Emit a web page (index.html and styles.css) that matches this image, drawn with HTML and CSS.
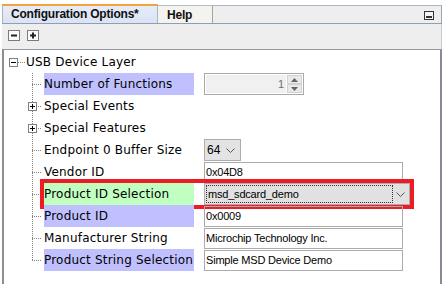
FILE: index.html
```html
<!DOCTYPE html>
<html>
<head>
    <meta charset="UTF-8">
    <meta name="viewport" content="width=device-width, initial-scale=1.0">
    <title>Configuration Options</title>
    <link rel="stylesheet" href="styles.css">
</head>
<body>
<div class="panel">
    <div class="tabs">
        <div class="tab active">Configuration Options*</div>
        <div class="tab">Help</div>
        <div class="tab-fill">
            <svg class="min-btn" width="10" height="9" viewBox="0 0 10 9">
                <rect x="0.5" y="0.5" width="9" height="8" fill="#f4f4f4" stroke="#333"/>
                <rect x="2" y="5" width="6" height="2" fill="#333"/>
            </svg>
        </div>
    </div>

    <div class="toolbar">
        <svg class="tb-btn" width="12" height="11" viewBox="0 0 12 11">
            <rect x="0.5" y="0.5" width="11" height="10" fill="#fbfbfb" stroke="#7a7a7a"/>
            <rect x="3" y="4.5" width="6" height="2" fill="#222"/>
        </svg>
        <svg class="tb-btn" width="12" height="11" viewBox="0 0 12 11">
            <rect x="0.5" y="0.5" width="11" height="10" fill="#fbfbfb" stroke="#7a7a7a"/>
            <rect x="3" y="4.5" width="6" height="2" fill="#222"/>
            <rect x="5" y="2.5" width="2" height="6" fill="#222"/>
        </svg>
    </div>

    <div class="tree">
        <div class="row">
            <span class="root-guide">
                <svg class="exp" width="9" height="9" viewBox="0 0 9 9">
                    <rect x="0.5" y="0.5" width="8" height="8" fill="#fff" stroke="#808080"/>
                    <rect x="2" y="4" width="5" height="1" fill="#000"/>
                </svg>
                <span class="hdot"></span>
            </span>
            <span class="label">USB Device Layer</span>
        </div>

        <div class="row">
            <span class="guide"></span>
            <span class="label blue">Number of Functions</span>
            <span class="spinner">
                <span class="spin-field">1</span>
                <span class="spin-btns">
                    <span class="spin-btn">
                        <svg width="7" height="4" viewBox="0 0 7 4"><polygon points="3.5,0 7,4 0,4" fill="#666"/></svg>
                    </span>
                    <span class="spin-btn">
                        <svg width="7" height="4" viewBox="0 0 7 4"><polygon points="0,0 7,0 3.5,4" fill="#666"/></svg>
                    </span>
                </span>
            </span>
        </div>

        <div class="row">
            <span class="guide">
                <svg class="exp child-exp" width="9" height="9" viewBox="0 0 9 9">
                    <rect x="0.5" y="0.5" width="8" height="8" fill="#fff" stroke="#808080"/>
                    <rect x="2" y="4" width="5" height="1" fill="#000"/>
                    <rect x="4" y="2" width="1" height="5" fill="#000"/>
                </svg>
            </span>
            <span class="label">Special Events</span>
        </div>

        <div class="row">
            <span class="guide">
                <svg class="exp child-exp" width="9" height="9" viewBox="0 0 9 9">
                    <rect x="0.5" y="0.5" width="8" height="8" fill="#fff" stroke="#808080"/>
                    <rect x="2" y="4" width="5" height="1" fill="#000"/>
                    <rect x="4" y="2" width="1" height="5" fill="#000"/>
                </svg>
            </span>
            <span class="label">Special Features</span>
        </div>

        <div class="row">
            <span class="guide"></span>
            <span class="label">Endpoint 0 Buffer Size</span>
            <span class="combo small">
                <span class="combo-text">64</span>
                <svg width="9" height="5" viewBox="0 0 9 5"><polyline points="0.5,0.5 4.5,4.5 8.5,0.5" fill="none" stroke="#555"/></svg>
            </span>
        </div>

        <div class="row">
            <span class="guide"></span>
            <span class="label">Vendor ID</span>
            <span class="field">0x04D8</span>
        </div>

        <div class="row">
            <span class="guide"></span>
            <span class="selected">
                <span class="label green">Product ID Selection</span>
                <span class="combo wide">
                    <span class="focus">msd_sdcard_demo</span>
                    <svg width="9" height="5" viewBox="0 0 9 5"><polyline points="0.5,0.5 4.5,4.5 8.5,0.5" fill="none" stroke="#555"/></svg>
                </span>
            </span>
        </div>

        <div class="row">
            <span class="guide"></span>
            <span class="label blue">Product ID</span>
            <span class="field">0x0009</span>
        </div>

        <div class="row">
            <span class="guide"></span>
            <span class="label">Manufacturer String</span>
            <span class="field">Microchip Technology Inc.</span>
        </div>

        <div class="row">
            <span class="guide last"></span>
            <span class="label blue">Product String Selection</span>
            <span class="field">Simple MSD Device Demo</span>
        </div>
    </div>
</div>
</body>
</html>
```

FILE: styles.css
```css
body {
    margin: 0;
    background-color: #ffffff;
    font-family: "DejaVu Sans", Verdana, sans-serif;
}

.panel {
    margin-left: 2px;
    width: 440px;
    height: 284px;
    display: flex;
    flex-direction: column;
}

/* tab strip */
.tabs {
    margin-top: 4px;
    height: 19px;
    display: flex;
    border-bottom: 1px solid #8d9fb4;
}

.tab {
    font-family: "Liberation Sans", Arial, sans-serif;
    font-weight: bold;
    font-size: 12px;
    letter-spacing: -0.2px;
    color: #101010;
    box-sizing: border-box;
}

.tab.active {
    width: 156px;
    height: 19px;
    padding-left: 8px;
    line-height: 17px;
    border-top: 2px solid #f2a43a;
    border-left: 1px solid #a9b5c5;
    border-right: 1px solid #a9b5c5;
    background: linear-gradient(#e6ecf8, #dbe3f4);
}

.tab:not(.active) {
    margin-top: 1px;
    width: 55px;
    height: 18px;
    padding-left: 9px;
    line-height: 18px;
    border-top: 1px solid #b4bfcd;
    border-right: 1px solid #a3a3a3;
    background-color: #f4f3ee;
}

.tab-fill {
    flex: 1;
    margin-top: 1px;
    border-top: 1px solid #a9b6c6;
    border-right: 1px solid #9aa6b5;
    background-color: #eeeeee;
    display: flex;
    justify-content: flex-end;
    align-items: flex-start;
}

.min-btn {
    margin-top: 5px;
    margin-right: 7px;
}

/* toolbar */
.toolbar {
    height: 25px;
    background-color: #eeeeee;
    border-right: 1px solid #c9ced6;
    display: flex;
    align-items: flex-start;
    gap: 7px;
    padding-left: 6px;
    padding-top: 6px;
    box-sizing: border-box;
}

/* tree */
.tree {
    flex: 1;
    border-top: 1px solid #939aa4;
    border-left: 2px solid #8e8e8e;
    border-right: 2px solid #868b95;
    padding-top: 1px;
    background-color: #ffffff;
}

.row {
    display: flex;
    height: 22px;
    align-items: flex-start;
}

.root-guide {
    width: 22px;
    height: 22px;
    box-sizing: border-box;
    padding-left: 5px;
    display: flex;
    align-items: center;
    flex: none;
}

.hdot {
    width: 7px;
    height: 1px;
    background: repeating-linear-gradient(to right, #808080 0 1px, transparent 1px 2px);
}

.guide {
    width: 40px;
    height: 22px;
    flex: none;
    background:
        repeating-linear-gradient(to bottom, #808080 0 1px, transparent 1px 2px) 28px 0 / 1px 100% no-repeat,
        repeating-linear-gradient(to right, #808080 0 1px, transparent 1px 2px) 28px 11px / 10px 1px no-repeat;
}

.guide.last {
    background:
        repeating-linear-gradient(to bottom, #808080 0 1px, transparent 1px 2px) 28px 0 / 1px 12px no-repeat,
        repeating-linear-gradient(to right, #808080 0 1px, transparent 1px 2px) 28px 11px / 10px 1px no-repeat;
}

.exp {
    display: block;
    flex: none;
}

.child-exp {
    margin-left: 24px;
    margin-top: 7px;
}

.label {
    height: 22px;
    line-height: 22px;
    font-size: 12px;
    letter-spacing: 0.2px;
    color: #000000;
    white-space: nowrap;
    flex: none;
}

.row > .label,
.selected > .label {
    width: 150px;
    margin-right: 10px;
}

.root-guide + .label {
    width: auto;
}

.label.blue {
    background-color: #c0c0ff;
}

.label.green {
    background-color: #c0ffc0;
}

/* value editors */
.field,
.combo,
.spin-field {
    font-family: "Liberation Sans", Arial, sans-serif;
    font-size: 11px;
    letter-spacing: -0.2px;
    color: #000000;
}

.field {
    margin-top: 1px;
    width: 199px;
    height: 21px;
    box-sizing: border-box;
    border: 1px solid #ababab;
    padding-left: 1px;
    line-height: 19px;
    white-space: nowrap;
}

.spinner {
    width: 100px;
    height: 22px;
    box-sizing: border-box;
    border: 1px solid #a9a9a9;
    padding: 1px;
    display: flex;
    gap: 1px;
}

.spin-field {
    flex: 1;
    background-color: #f0f0f0;
    text-align: right;
    padding-right: 2px;
    line-height: 18px;
    color: #6f6f6f;
}

.spin-btns {
    width: 15px;
    display: flex;
    flex-direction: column;
}

.spin-btn {
    flex: 1;
    box-sizing: border-box;
    border: 1px solid #d2d2d2;
    background-color: #e9e9e9;
    display: flex;
    align-items: center;
    justify-content: center;
}

.combo {
    height: 22px;
    box-sizing: border-box;
    border: 1px solid #adadad;
    background-color: #e3e3e3;
    display: flex;
    align-items: center;
}

.combo.small {
    width: 37px;
    padding-left: 2px;
    gap: 6px;
}

.combo.small .combo-text {
    font-size: 12px;
    letter-spacing: 0;
}

.combo.wide {
    width: 206px;
    padding: 1px 4px 1px 1px;
    background-color: #e1e1e1;
    justify-content: space-between;
}

.focus {
    width: 187px;
    height: 18px;
    box-sizing: border-box;
    border: 1px dotted #333333;
    line-height: 16px;
    padding-left: 1px;
}

.selected {
    display: flex;
    outline: 4px solid #ec1c24;
}
```
